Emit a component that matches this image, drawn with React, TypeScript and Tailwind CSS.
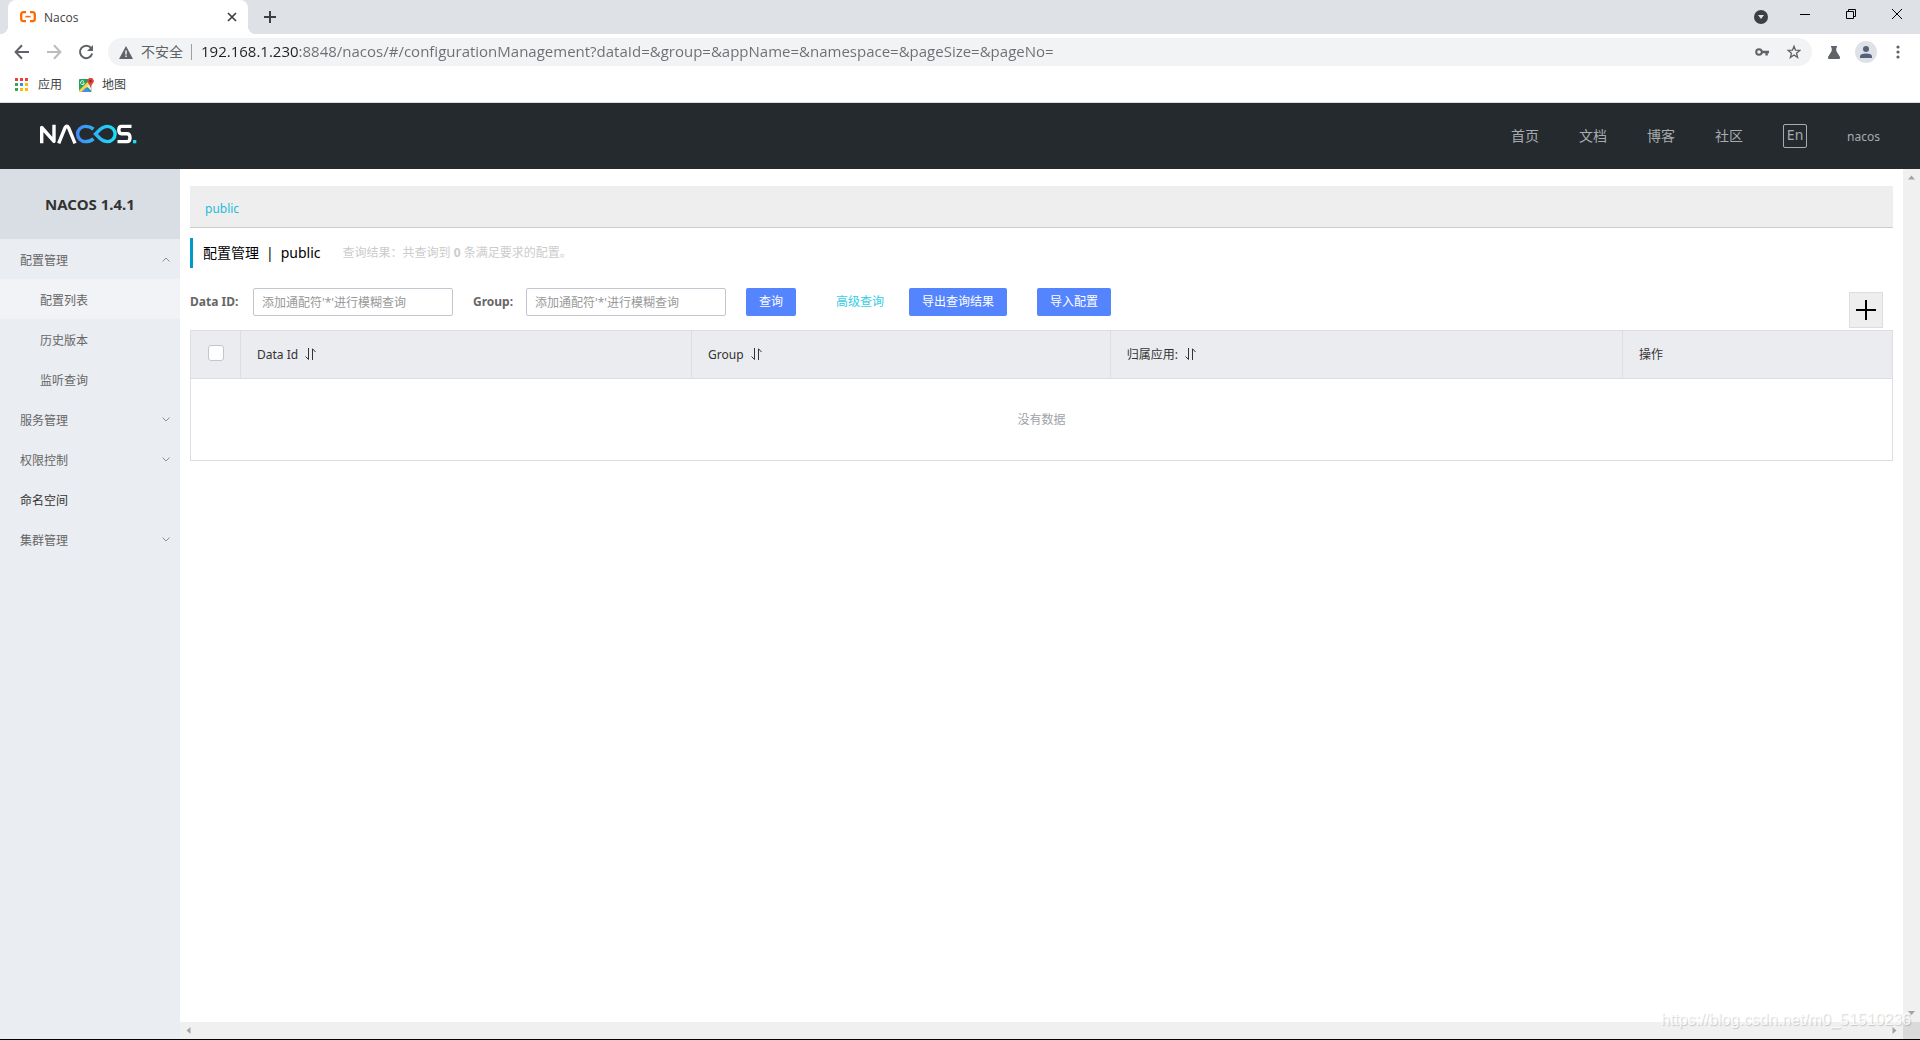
import React from "react";

const pageFont = "font-['Noto_Sans','Noto_Sans_CJK_SC',sans-serif]";
const chromeFont = "font-['Open_Sans','Noto_Sans_CJK_SC',sans-serif]";

function TabStrip() {
  return (
    <div className="flex h-[34px] shrink-0 items-stretch bg-[#dee1e6] pl-2">
      <div className="relative flex w-60 items-center rounded-t-lg bg-white pl-3 pr-2.5 before:absolute before:-left-2 before:bottom-0 before:size-2 before:bg-[radial-gradient(circle_at_0_0,#dee1e6_8px,white_8px)] after:absolute after:-right-2 after:bottom-0 after:size-2 after:bg-[radial-gradient(circle_at_100%_0,#dee1e6_8px,white_8px)]">
        <svg width="16" height="12" viewBox="0 0 16 12" fill="none" stroke="#ff6a00" aria-hidden="true">
          <path d="M6 1.2H3.6Q1.2 1.2 1.2 3.6v4.2q0 2.400 2.400 2.400H6M10 1.2h2.400q2.400 0 2.400 2.400v4.200q0 2.400-2.400 2.400H10" strokeWidth="2.3" />
          <path d="M5.4 5.600h5.200" strokeWidth="1.6" />
        </svg>
        <span className="ml-2 flex-1 pt-0.5 text-xs text-[#3c4043]">Nacos</span>
        <button aria-label="关闭标签页" className="flex size-3 items-center justify-center">
          <svg width="10" height="10" viewBox="0 0 10 10" stroke="#3c4043" strokeWidth="1.7" aria-hidden="true">
            <path d="M1 1l8 8M9 1L1 9" />
          </svg>
        </button>
      </div>
      <button aria-label="新标签页" className="ml-4 flex w-3 items-center justify-center">
        <svg width="12" height="12" viewBox="0 0 12 12" stroke="#3c4043" strokeWidth="2" aria-hidden="true">
          <path d="M6 0v12M0 6h12" />
        </svg>
      </button>
      <div className="ml-auto flex items-stretch">
        <button aria-label="搜索标签页" className="flex w-9 items-center justify-center">
          <svg width="14" height="14" viewBox="0 0 14 14" aria-hidden="true">
            <circle cx="7" cy="7" r="7" fill="#3c4043" />
            <path d="M4 5h6L7 9z" fill="#dee1e6" />
          </svg>
        </button>
        <button aria-label="最小化" className="ml-[3px] flex w-[46px] justify-center pt-[9px]">
          <svg width="10" height="10" viewBox="0 0 10 10" stroke="#000" aria-hidden="true">
            <path d="M0 5.500h10" />
          </svg>
        </button>
        <button aria-label="还原" className="flex w-[46px] justify-center pt-[9px]">
          <svg width="10" height="10" viewBox="0 0 10 10" fill="none" stroke="#000" aria-hidden="true">
            <path d="M.5 2.500h7v7h-7zM2.500 2.500v-2h7v7h-2" />
          </svg>
        </button>
        <button aria-label="关闭" className="flex w-[46px] justify-center pt-[9px]">
          <svg width="10" height="10" viewBox="0 0 10 10" stroke="#000" aria-hidden="true">
            <path d="M0 0l10 10M10 0L0 10" />
          </svg>
        </button>
      </div>
    </div>
  );
}

function Toolbar() {
  return (
    <div className="flex h-9 shrink-0 items-center bg-white pl-[14px] pr-5">
      <button aria-label="后退">
        <svg width="16" height="16" viewBox="0 0 16 16" fill="none" stroke="#5f6368" strokeWidth="2" aria-hidden="true">
          <path d="M15 8H2M8 1.3L1.6 8 8 14.7" />
        </svg>
      </button>
      <button aria-label="前进" className="ml-4">
        <svg width="16" height="16" viewBox="0 0 16 16" fill="none" stroke="#babcbe" strokeWidth="2" aria-hidden="true">
          <path d="M1 8h13M8 1.3L14.4 8 8 14.7" />
        </svg>
      </button>
      <button aria-label="重新加载" className="ml-4">
        <svg width="16" height="16" viewBox="0 0 16 16" fill="none" stroke="#5f6368" strokeWidth="2" aria-hidden="true">
          <path d="M13.2 4.2A6.2 6.2 0 1 0 14.2 9.6" />
          <path d="M15 1v6H9z" fill="#5f6368" stroke="none" />
        </svg>
      </button>
      <div className="ml-[14px] flex h-7 flex-1 items-center rounded-full bg-[#f1f3f4] pl-[11px] pr-[11px]">
        <svg width="14" height="13" viewBox="0 0 14 13" aria-hidden="true">
          <path d="M7 0l7 13H0z" fill="#5f6368" />
          <path d="M7 4.500v4M7 9.500v1.600" stroke="#f1f3f4" strokeWidth="1.5" />
        </svg>
        <span className="ml-2 text-sm text-[#5f6368]">不安全</span>
        <span className="ml-2 h-4 w-px bg-[#9aa0a6]" />
        <input
          aria-label="地址"
          readOnly
          defaultValue="192.168.1.230:8848/nacos/#/configurationManagement?dataId=&group=&appName=&namespace=&pageSize=&pageNo="
          className="ml-[9px] h-7 flex-1 bg-[linear-gradient(90deg,#202124_98px,#6b6e72_98px)] bg-clip-text pb-0.5 text-[15px] text-transparent outline-none"
        />
        <button aria-label="密码">
          <svg width="14" height="8" viewBox="0 0 14 8" fill="none" stroke="#5f6368" strokeWidth="2" aria-hidden="true">
            <circle cx="4" cy="4" r="2.8" />
            <path d="M6.5 4H14M11.6 4v3.600" strokeWidth="2.4" />
          </svg>
        </button>
        <button aria-label="收藏" className="ml-[18px]">
          <svg width="14" height="14" viewBox="0 0 14 14" fill="none" stroke="#5f6368" strokeWidth="1.3" aria-hidden="true">
            <path d="M7 1.200L8.500 5.200 12.800 5.400 9.500 8.200 10.600 12.400 7 10 3.400 12.400 4.500 8.200 1.200 5.400 5.500 5.200z" />
          </svg>
        </button>
      </div>
      <button aria-label="实验" className="ml-4">
        <svg width="12" height="13" viewBox="0 0 12 13" fill="#5f6368" aria-hidden="true">
          <path d="M3 0h6v1.500H8.300V5L12 11q.3 2-1 2H1q-1.300 0-1-2L3.700 5V1.500H3z" />
        </svg>
      </button>
      <button aria-label="用户" className="ml-[15px]">
        <svg width="22" height="22" viewBox="0 0 22 22" aria-hidden="true">
          <circle cx="11" cy="11" r="11" fill="#dee1e6" />
          <circle cx="11" cy="8" r="3" fill="#54617a" />
          <path d="M5 17v-1.500Q5 12.500 11 12.500t6 3V17z" fill="#54617a" />
        </svg>
      </button>
      <button aria-label="菜单" className="ml-[19px]">
        <svg width="4" height="14" viewBox="0 0 4 14" fill="#5f6368" aria-hidden="true">
          <circle cx="2" cy="2" r="1.600" />
          <circle cx="2" cy="7" r="1.600" />
          <circle cx="2" cy="12" r="1.600" />
        </svg>
      </button>
    </div>
  );
}

function Bookmarks() {
  const dots = ["#ea4335", "#ea4335", "#ea4335", "#34a853", "#4285f4", "#fbbc04", "#34a853", "#fbbc04", "#fbbc04"];
  return (
    <div className="flex h-[33px] shrink-0 items-center border-b border-[#dadce0] bg-white pb-[3px] pl-[15px] text-xs text-[#3c4043]">
      <a href="#apps" className="flex items-center">
        <svg width="13" height="13" viewBox="0 0 13 13" aria-hidden="true">
          {dots.map((c, i) => (
            <rect key={i} x={(i % 3) * 5} y={Math.floor(i / 3) * 5} width="3" height="3" fill={c} />
          ))}
        </svg>
        <span className="ml-[10px]">应用</span>
      </a>
      <a href="#maps" className="ml-[17px] flex items-center">
        <svg width="15" height="14" viewBox="0 0 15 14" aria-hidden="true">
          <rect y="1" width="12.500" height="13" rx="1" fill="#1ea362" />
          <path d="M0 12.500L10.500 2 12.500 4.500 3.500 14H1Q0 14 0 13z" fill="#fdd446" />
          <path d="M2.500 14l4.500-4.500 4.500 4.500z" fill="#4a89f3" />
          <path d="M7.800 8.500l4.700-4.500v9z" fill="#e8eaed" />
          <path d="M5 3.600A1.900 1.900 0 1 0 5.300 5H3.500" fill="none" stroke="#fff" strokeWidth=".9" />
          <path d="M11.500 10Q11 7 9.200 5.300A3.200 3.200 0 1 1 13.900 5.300Q12 7 11.500 10z" fill="#e0443a" />
          <circle cx="11.500" cy="3.200" r="1.100" fill="#8c1f17" />
        </svg>
        <span className="ml-2">地图</span>
      </a>
    </div>
  );
}

function NacosLogo() {
  return (
    <svg width="98" height="20" viewBox="0 0 98 20" fill="none" strokeWidth="3.4" role="img" aria-label="Nacos" className="mb-1">
      <defs>
        <linearGradient id="loop" gradientUnits="userSpaceOnUse" x1="37" y1="0" x2="77" y2="0">
          <stop offset="0" stopColor="#4487f7" />
          <stop offset="1" stopColor="#1ae0f5" />
        </linearGradient>
      </defs>
      <path d="M2.700 19.300V3.500L15 17.300V.700" stroke="#fff" strokeLinejoin="round" />
      <path d="M19.700 19.300L26 3.800Q27.800.8 29.600 3.800L36 19.300" stroke="#fff" />
      <path d="M54.500 5.200Q51 2.400 46.200 2.400A7.600 7.600 0 0 0 46.200 17.600Q51 17.600 54.500 14.800" stroke="url(#loop)" />
      <path d="M56.500 10L61 5.500Q64.500 2.400 68.500 2.400A7.600 7.600 0 0 1 68.500 17.600Q64.500 17.600 61 14.500z" stroke="url(#loop)" />
      <path d="M92.500 2.400H82.500Q79.800 2.400 79.800 6T82.500 9.800H88Q91 9.800 91 13.700T88 17.600H78.500" stroke="#fff" />
      <rect x="94" y="16" width="3.300" height="3.300" fill="#1ae0f5" />
    </svg>
  );
}

function SiteHeader() {
  const link = "text-sm text-[#a8acae]";
  return (
    <header className="flex h-[66px] shrink-0 items-center bg-[#252a2f] pl-[39px] pr-10">
      <a href="#home">
        <NacosLogo />
      </a>
      <nav className="ml-auto flex items-center gap-10">
        <a href="#index" className={link}>首页</a>
        <a href="#docs" className={link}>文档</a>
        <a href="#blog" className={link}>博客</a>
        <a href="#community" className={link}>社区</a>
        <button className="flex h-6 w-6 items-center justify-center rounded-xs border border-[#a8acae] pb-0.5 text-sm text-[#a8acae]">En</button>
        <a href="#user" className="pt-0.5 text-xs text-[#a8acae]">nacos</a>
      </nav>
    </header>
  );
}

function Chevron({ up }: { up?: boolean }) {
  return (
    <svg width="8" height="5" viewBox="0 0 8 5" fill="none" stroke="#8c9096" className="mb-1" aria-hidden="true">
      <path d={up ? "M.5 4.500L4 1l3.500 3.500" : "M.5.5L4 4 7.500.5"} />
    </svg>
  );
}

function MenuGroup({ label, open }: { label: string; open?: boolean }) {
  return (
    <button className="flex h-10 w-full items-center justify-between pl-5 pr-[10px] pt-1 text-[#666]" aria-expanded={!!open}>
      {label}
      <Chevron up={open} />
    </button>
  );
}

function MenuLink({ label, active }: { label: string; active?: boolean }) {
  return (
    <a href="#menu" className={active ? "flex h-10 items-center bg-[#f2f3f7] pl-10 pt-1" : "flex h-10 items-center pl-10 pt-1"}>
      {label}
    </a>
  );
}

function Sidebar() {
  return (
    <aside className="w-[180px] shrink-0 bg-[#eaedf1] text-xs text-[#666]">
      <h1 className="flex h-[70px] items-center justify-center bg-[#d9dde4] text-[15px] font-bold text-[#333]">NACOS 1.4.1</h1>
      <nav>
        <MenuGroup label="配置管理" open />
        <MenuLink label="配置列表" active />
        <MenuLink label="历史版本" />
        <MenuLink label="监听查询" />
        <MenuGroup label="服务管理" />
        <MenuGroup label="权限控制" />
        <a href="#namespace" className="flex h-10 items-center pl-5 pt-1 text-[#333]">命名空间</a>
        <MenuGroup label="集群管理" />
      </nav>
    </aside>
  );
}

function SortIcon() {
  return (
    <svg width="11" height="12" viewBox="0 0 11 12" fill="none" stroke="#333" className="mb-0.5" aria-hidden="true">
      <path d="M3.500 0v11.500L.5 8.500M7.500 12V.800L10.500 4" />
    </svg>
  );
}

function SortHead({ label }: { label: string }) {
  return (
    <button className="flex items-center gap-[7px]">
      {label}
      <SortIcon />
    </button>
  );
}

function SearchForm() {
  const field = "h-7 w-[200px] rounded-xs border border-[#c4c6cf] bg-white px-2 text-xs outline-none placeholder:text-[#999]";
  const action = "h-7 rounded-xs bg-[#5584ff] px-[13px] text-xs text-white";
  return (
    <form className="relative mt-5 flex h-7 items-center text-xs" onSubmit={(e) => e.preventDefault()}>
      <label htmlFor="dataId" className="w-[63px] font-bold text-[#666]">Data ID:</label>
      <input id="dataId" placeholder="添加通配符'*'进行模糊查询" className={field} />
      <label htmlFor="group" className="ml-5 w-[53px] font-bold text-[#666]">Group:</label>
      <input id="group" placeholder="添加通配符'*'进行模糊查询" className={field} />
      <button type="submit" className={action + " ml-5"}>查询</button>
      <a href="#advanced" className="ml-10 text-[#33cde5]">高级查询</a>
      <button type="button" className={action + " ml-[25px]"}>导出查询结果</button>
      <button type="button" className={action + " ml-[30px]"}>导入配置</button>
      <button type="button" aria-label="新建配置" className="absolute right-[10px] top-1 flex h-9 w-[34px] items-center justify-center border border-[#ddd] bg-[#eee]">
        <svg width="20" height="20" viewBox="0 0 20 20" stroke="#000" strokeWidth="2" aria-hidden="true">
          <path d="M10 0v20M0 10h20" />
        </svg>
      </button>
    </form>
  );
}

function ConfigTable() {
  const head = "border-l border-[#dcdee3] pl-4 text-left font-normal";
  return (
    <table className="mt-[14px] w-full table-fixed border border-[#dcdee3] text-xs text-[#333]">
      <thead>
        <tr className="h-12 border-b border-[#dcdee3] bg-[#ebecf0]">
          <th className="w-[50px] pb-[3px]">
            <input type="checkbox" aria-label="全选" className="mx-auto block size-4 appearance-none rounded-[3px] border border-[#c4c6cf] bg-white" />
          </th>
          <th className={head + " w-[26.5%]"}><SortHead label="Data Id" /></th>
          <th className={head + " w-[24.6%]"}><SortHead label="Group" /></th>
          <th className={head + " w-[30.1%]"}><SortHead label="归属应用:" /></th>
          <th className={head}>操作</th>
        </tr>
      </thead>
      <tbody>
        <tr className="h-[82px]">
          <td colSpan={5} className="text-center text-[#a0a2a8]">没有数据</td>
        </tr>
      </tbody>
    </table>
  );
}

function Arrow({ d }: { d: string }) {
  return (
    <svg width="7" height="7" viewBox="0 0 7 7" fill="#a3a3a3" aria-hidden="true">
      <path d={d} />
    </svg>
  );
}

function Content() {
  return (
    <main className="flex min-w-0 flex-1 bg-white">
      <div className="flex min-w-0 flex-1 flex-col">
        <div className="flex-1 pl-[10px] pr-[10px] pt-[17px]">
          <div className="flex h-[42px] items-center border-b border-[#ccc] bg-[#eee] pl-[15px] pt-1 text-xs">
            <a href="#public" className="text-[#1ebbd8]">public</a>
          </div>
          <div className="mt-[10px] flex h-[30px] items-center border-l-[3px] border-[#09c] pl-[10px]">
            <h2 className="flex items-center gap-[7px] text-sm text-black">
              <span>配置管理</span>
              <span>|</span>
              <span>public</span>
            </h2>
            <p className="ml-[22px] text-xs text-[#ccc]">
              查询结果：共查询到 <strong>0</strong> 条满足要求的配置。
            </p>
          </div>
          <SearchForm />
          <ConfigTable />
        </div>
        <div className="flex h-[17px] shrink-0 items-center justify-between bg-[#f0f0f0] px-[5px]">
          <Arrow d="M5.500 0v7L1.500 3.500z" />
          <Arrow d="M1.500 0v7l4-3.500z" />
        </div>
      </div>
      <div className="flex w-[17px] shrink-0 flex-col items-center justify-between bg-[#f0f0f0] pt-[5px]">
        <Arrow d="M0 5.500h7L3.500 1.500z" />
        <div className="flex w-full flex-col items-center gap-1">
          <Arrow d="M0 0h7l-3.500 4z" />
          <div className="h-[17px] w-full bg-[#dadada]" />
        </div>
      </div>
    </main>
  );
}

export default function App() {
  return (
    <div className="relative flex h-screen flex-col overflow-hidden border-b border-black">
      <div className={"shrink-0 " + chromeFont}>
        <TabStrip />
        <Toolbar />
        <Bookmarks />
      </div>
      <div className={"flex min-h-0 flex-1 flex-col " + pageFont}>
        <SiteHeader />
        <div className="flex min-h-0 flex-1">
          <Sidebar />
          <Content />
        </div>
      </div>
      <span className="pointer-events-none absolute bottom-[7px] right-[9px] font-['Liberation_Sans',sans-serif] text-base text-white/80 [text-shadow:1px_1px_1px_rgba(0,0,0,0.18)]">
        https://blog.csdn.net/m0_51510236
      </span>
    </div>
  );
}
